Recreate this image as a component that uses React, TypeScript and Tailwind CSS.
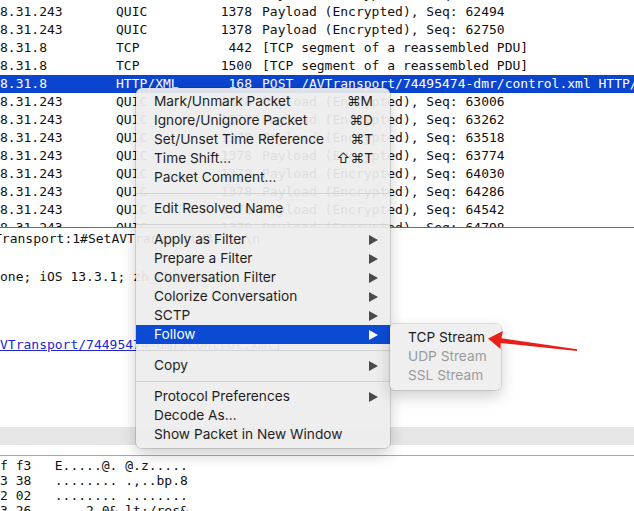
import React from "react";

type Row = { ip: string; p: string; len: string; info: string; sel?: boolean };

const rows: Row[] = [
  { ip: "8.31.243", p: "QUIC", len: "1378", info: "Payload (Encrypted), Seq: 62238" },
  { ip: "8.31.243", p: "QUIC", len: "1378", info: "Payload (Encrypted), Seq: 62494" },
  { ip: "8.31.243", p: "QUIC", len: "1378", info: "Payload (Encrypted), Seq: 62750" },
  { ip: "8.31.8", p: "TCP", len: "442", info: "[TCP segment of a reassembled PDU]" },
  { ip: "8.31.8", p: "TCP", len: "1500", info: "[TCP segment of a reassembled PDU]" },
  { ip: "8.31.8", p: "HTTP/XML", len: "168", info: "POST /AVTransport/74495474-dmr/control.xml HTTP/1.1 ", sel: true },
  { ip: "8.31.243", p: "QUIC", len: "1378", info: "Payload (Encrypted), Seq: 63006" },
  { ip: "8.31.243", p: "QUIC", len: "1378", info: "Payload (Encrypted), Seq: 63262" },
  { ip: "8.31.243", p: "QUIC", len: "1378", info: "Payload (Encrypted), Seq: 63518" },
  { ip: "8.31.243", p: "QUIC", len: "1378", info: "Payload (Encrypted), Seq: 63774" },
  { ip: "8.31.243", p: "QUIC", len: "1378", info: "Payload (Encrypted), Seq: 64030" },
  { ip: "8.31.243", p: "QUIC", len: "1378", info: "Payload (Encrypted), Seq: 64286" },
  { ip: "8.31.243", p: "QUIC", len: "1378", info: "Payload (Encrypted), Seq: 64542" },
  { ip: "8.31.243", p: "QUIC", len: "1378", info: "Payload (Encrypted), Seq: 64798" },
];

type Item =
  | { kind: "sep" }
  | { kind: "item"; label: string; shortcut?: string; sub?: boolean; active?: boolean };

const menu: Item[] = [
  { kind: "item", label: "Mark/Unmark Packet", shortcut: "⌘M" },
  { kind: "item", label: "Ignore/Unignore Packet", shortcut: "⌘D" },
  { kind: "item", label: "Set/Unset Time Reference", shortcut: "⌘T" },
  { kind: "item", label: "Time Shift…", shortcut: "⇧⌘T" },
  { kind: "item", label: "Packet Comment…" },
  { kind: "sep" },
  { kind: "item", label: "Edit Resolved Name" },
  { kind: "sep" },
  { kind: "item", label: "Apply as Filter", sub: true },
  { kind: "item", label: "Prepare a Filter", sub: true },
  { kind: "item", label: "Conversation Filter", sub: true },
  { kind: "item", label: "Colorize Conversation", sub: true },
  { kind: "item", label: "SCTP", sub: true },
  { kind: "item", label: "Follow", sub: true, active: true },
  { kind: "sep" },
  { kind: "item", label: "Copy", sub: true },
  { kind: "sep" },
  { kind: "item", label: "Protocol Preferences", sub: true },
  { kind: "item", label: "Decode As…" },
  { kind: "item", label: "Show Packet in New Window" },
];

function Tri({ white }: { white?: boolean }) {
  return (
    <svg width="9" height="10" viewBox="0 0 9 10">
      <polygon points="0,0 9,5 0,10" fill={white ? "#ffffff" : "#4a4a4a"} />
    </svg>
  );
}

export default function App() {
  return (
    <div className="relative w-[634px] h-[511px] overflow-hidden bg-white text-[#111] font-['DejaVu_Sans_Mono',monospace] text-[13px]">
      {/* Packet list */}
      <div className="h-[227px] overflow-hidden">
        <div className="-mt-[15px]">
          {rows.map((r, i) => (
            <div
              key={i}
              className={
                "flex h-[18px] items-center whitespace-nowrap " +
                (r.sel ? "bg-[#0b44cf] text-white" : "")
              }
            >
              <div className="w-[116px] shrink-0">{r.ip}</div>
              <div className="w-[100px] shrink-0">{r.p}</div>
              <div className="w-[36px] shrink-0 text-right">{r.len}</div>
              <div className="pl-[10px]">{r.info}</div>
            </div>
          ))}
        </div>
      </div>
      <div className="h-px bg-[#3674e0]" />

      {/* Details pane */}
      <div className="h-[199px] pt-[2px] whitespace-nowrap">
        <div className="h-[18px] flex items-center -ml-[6px]">Transport:1#SetAVTransportURI"\r\n</div>
        <div className="h-[18px] flex items-center mt-[20px]">one; iOS 13.3.1; zh_CN)\r\n</div>
        <div className="h-[18px] flex items-center mt-[50px]">
          <span className="text-[#2026d4] underline">VTransport/74495474-dmr/control.xml]</span>
        </div>
      </div>
      <div className="h-[18px] bg-[#e6e6e6]" />
      <div className="h-[10px]" />
      <div className="h-px bg-[#a8a8a8]" />

      {/* Hex pane */}
      <div className="pt-[2px] whitespace-pre">
        <div className="h-[15px] flex items-center">{"f f3   E.....@. @.z....."}</div>
        <div className="h-[15px] flex items-center">{"3 38   ........ .,..bp.8"}</div>
        <div className="h-[15px] flex items-center">{"2 02   ........ ........"}</div>
        <div className="h-[15px] flex items-center">{"3 26   ....2.0& lt;/res&"}</div>
      </div>

      {/* Context menu */}
      <div className="absolute left-[136px] top-[88px] w-[254px] rounded-[6px] bg-[rgba(237,237,237,0.93)] py-[4px] shadow-[0_0_0_1px_rgba(0,0,0,0.12),0_6px_16px_rgba(0,0,0,0.2)] font-['Inter','DejaVu_Sans',sans-serif] text-[13.7px] text-[#1e1e1e]">
        {menu.map((m, i) =>
          m.kind === "sep" ? (
            <div key={i} className="h-[12px] flex items-center">
              <div className="h-px w-full bg-[#d3d3d3]" />
            </div>
          ) : (
            <div
              key={i}
              className={
                "h-[19px] flex items-center justify-between pl-[18px] " +
                (m.sub ? "pr-[12px] " : "pr-[17px] ") +
                (m.active ? "bg-[#0b4ad3] text-white" : "")
              }
            >
              <span>{m.label}</span>
              {m.shortcut && <span>{m.shortcut}</span>}
              {m.sub && <Tri white={m.active} />}
            </div>
          )
        )}
      </div>

      {/* Submenu */}
      <div className="absolute left-[390px] top-[324px] w-[111px] h-[66px] rounded-[5px] bg-[rgba(238,238,238,0.96)] pt-[4px] shadow-[0_0_0_1px_rgba(0,0,0,0.1),0_6px_16px_rgba(0,0,0,0.2)] font-['Inter','DejaVu_Sans',sans-serif] text-[13.7px]">
        <div className="h-[19px] flex items-center pl-[18px] text-[#1e1e1e]">TCP Stream</div>
        <div className="h-[19px] flex items-center pl-[18px] text-[#9c9c9c]">UDP Stream</div>
        <div className="h-[19px] flex items-center pl-[18px] text-[#9c9c9c]">SSL Stream</div>
      </div>

      {/* Red annotation arrow */}
      <svg className="absolute left-0 top-0 pointer-events-none" width="634" height="511" viewBox="0 0 634 511">
        <polygon
          points="488,338.5 503,331 501.3,338.3 577.1,349.2 576.9,350.9 500.7,343 500.5,349"
          fill="#e8201a"
        />
      </svg>
    </div>
  );
}
